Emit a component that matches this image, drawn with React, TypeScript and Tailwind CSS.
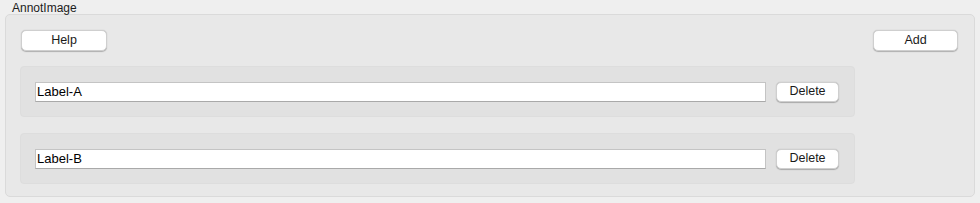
import { useState } from 'react';

const font = { fontFamily: '"Liberation Sans", Arial, sans-serif' };

function MacButton({ label, className }: { label: string; className: string }) {
  return (
    <button
      className={`h-[21px] rounded-[5px] bg-white text-[12.5px] text-[#1a1a1a] border border-[#cfcfcf] shadow-[0_0.5px_1px_rgba(0,0,0,0.25)] leading-none ${className}`}
    >
      {label}
    </button>
  );
}

export default function App() {
  const [labels, setLabels] = useState(['Label-A', 'Label-B']);

  return (
    <div className="w-full h-[203px] bg-[#efefef] overflow-hidden" style={font}>
      <div className="pl-[12px] pt-[2px] h-[14px] text-[12px] leading-[13px] text-[#1c1c1c]">AnnotImage</div>
      <div className="mx-[5px] h-[183px] rounded-[5px] border border-[#dadada] bg-[#e8e8e8] pl-[14px] pr-[15px] pt-[15px]">
        <div className="flex justify-between">
          <MacButton label="Help" className="ml-[1px] w-[86px]" />
          <MacButton label="Add" className="mr-[1px] w-[85px]" />
        </div>
        <div className="mt-[15px] flex flex-col gap-[16px] w-[835px]">
          {labels.map((label, i) => (
            <div
              key={i}
              className="h-[51px] rounded-[4px] border border-[#dddddd] bg-[#e1e1e1] flex items-center pl-[14px] pr-[15px]"
            >
              <input
                value={label}
                onChange={(e) => {
                  const next = [...labels];
                  next[i] = e.target.value;
                  setLabels(next);
                }}
                className="w-[731px] h-[20px] bg-white border border-[#c4c4c4] border-b-[#a9a9a9] px-[1px] text-[13px] text-black outline-none"
                style={font}
              />
              <MacButton label="Delete" className="ml-[10px] w-[63px] !h-[20px]" />
            </div>
          ))}
        </div>
      </div>
    </div>
  );
}
